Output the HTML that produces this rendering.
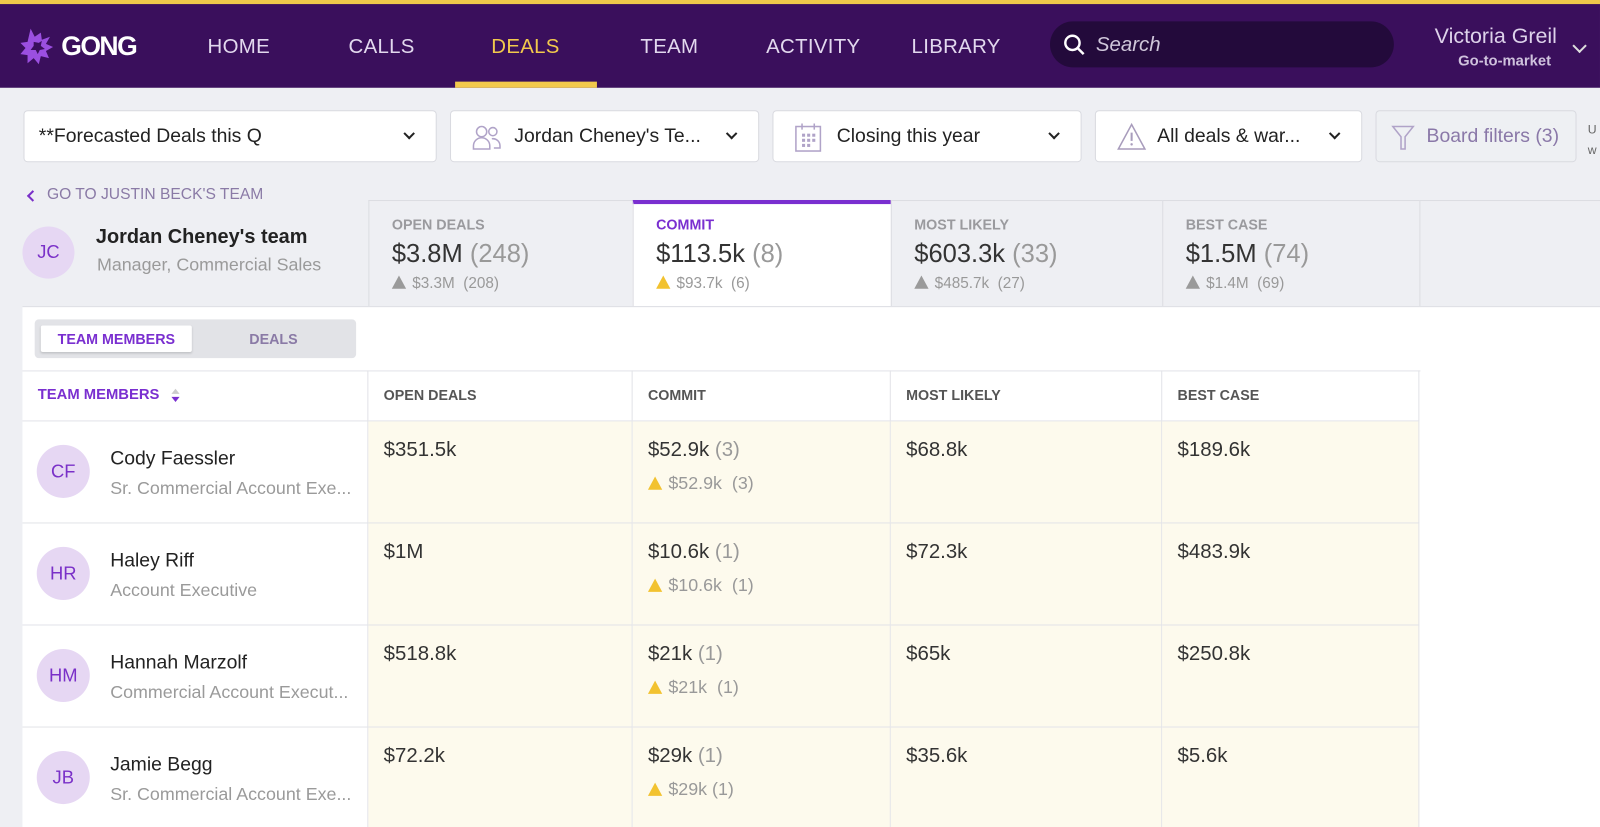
<!DOCTYPE html>
<html><head><meta charset="utf-8"><style>
*{box-sizing:border-box;margin:0;padding:0}
html,body{width:1600px;height:827px;overflow:hidden;background:#eeeff3}
body{font-family:"Liberation Sans",sans-serif;position:relative;color:#222}
#w{position:absolute;left:0;top:0;width:1568px;height:811px;transform:scale(1.0204);transform-origin:0 0}
.abs{position:absolute}
.nav{left:0;top:0;width:1568px;height:86px;background:#3a0f5c;border-top:4px solid #eec84a}
.ni{position:absolute;top:31px;font-size:20px;color:#e2d8ee;transform:translateX(-50%);letter-spacing:0.3px}
.fb{position:absolute;top:108px;height:51px;background:#fff;border:1px solid #d9dae0;border-radius:4px;font-size:19px;color:#222}
.fb .t{position:absolute;top:14px;white-space:nowrap}
.chev{position:absolute;top:18px;width:8px;height:8px;border-right:2px solid #222;border-bottom:2px solid #222;transform:rotate(45deg)}
.tab{position:absolute;top:196px;height:104px;border-left:1px solid #dcdde2;border-top:1px solid #dcdde2}
.tab .l{position:absolute;left:22px;top:15px;font-size:14px;font-weight:bold;color:#9a9a9e}
.tab .v{position:absolute;left:22px;top:38px;font-size:25px;color:#333;white-space:nowrap}
.tab .v span{color:#999}
.tab .s{position:absolute;left:22px;top:72px;font-size:15px;color:#999;white-space:nowrap}
.tri{display:inline-block;width:0;height:0;border-left:7px solid transparent;border-right:7px solid transparent;border-bottom:13px solid #9a9a9a;vertical-align:-1px;margin-right:6px}
.tri.y{border-bottom-color:#f2c230}
.cell{position:absolute;border-right:1px solid #e2e3e8;border-bottom:1px solid #e2e3e8}
.hd{font-size:14px;font-weight:bold;color:#555;padding:16px 0 0 15px;white-space:nowrap}
.dc{background:#fdfaed}
.val{position:absolute;left:15px;top:17px;font-size:20px;color:#333;white-space:nowrap}
.val span{color:#999}
.sub{position:absolute;left:15px;top:50px;font-size:17.5px;color:#999;white-space:nowrap}
.av{position:absolute;width:52px;height:52px;border-radius:50%;background:#e6d7f3;color:#7a30c8;font-size:18px;text-align:center;line-height:52px}
.nm{position:absolute;left:86px;font-size:19px;color:#222;white-space:nowrap}
.ti{position:absolute;left:86px;font-size:17.5px;color:#9a9a9a;white-space:nowrap}
</style></head><body><div id="w">
<div class="abs nav">
  <svg class="abs" style="left:20px;top:22px" width="36" height="40" viewBox="0 0 36 40"><path d="M10 2l4 8 6-4 1 7 8-3-4 7 7 3-7 4 3 7-8-2-2 8-5-6-6 5 0-8-7-1 5-6-5-5 7-1z" fill="#9b4fe0"/><path d="M13 15l5 1 3-2-1 5 4 3-5 1-2 4-2-4-5 0 3-4z" fill="#3a0f5c"/></svg>
  <div class="abs" style="left:60px;top:26px;font-size:26px;font-weight:bold;color:#fff;letter-spacing:-1.5px">GONG</div>
  <div class="ni" style="left:234px">HOME</div>
  <div class="ni" style="left:374px">CALLS</div>
  <div class="ni" style="left:515px;color:#f2c94c">DEALS</div>
  <div class="abs" style="left:446px;top:76px;width:139px;height:6px;background:#f2c94c"></div>
  <div class="ni" style="left:656px">TEAM</div>
  <div class="ni" style="left:797px">ACTIVITY</div>
  <div class="ni" style="left:937px">LIBRARY</div>
  <div class="abs" style="left:1029px;top:17px;width:337px;height:45px;background:#230a3b;border-radius:23px">
    <svg class="abs" style="left:13px;top:12px" width="22" height="22" viewBox="0 0 22 22"><circle cx="9" cy="9" r="7" stroke="#fff" stroke-width="2.4" fill="none"/><path d="M14 14l6 6" stroke="#fff" stroke-width="2.4"/></svg>
    <div class="abs" style="left:45px;top:12px;font-size:20px;font-style:italic;color:#cfc6da">Search</div>
  </div>
  <div class="abs" style="left:1406px;top:20px;font-size:21px;color:#ddd2ea;white-space:nowrap">Victoria Greil</div>
  <div class="abs" style="left:1429px;top:48px;font-size:14.5px;font-weight:bold;color:#cfc2dd">Go-to-market</div>
  <div class="abs" style="left:1543px;top:36px;width:10px;height:10px;border-right:2.5px solid #ddd;border-bottom:2.5px solid #ddd;transform:rotate(45deg)"></div>
</div>

<div class="fb" style="left:23px;width:405px"><div class="t" style="left:14px">**Forecasted Deals this Q</div><div class="chev" style="right:22px"></div></div>
<div class="fb" style="left:441px;width:303px">
  <svg class="abs" style="left:20px;top:13px" width="30" height="26" viewBox="0 0 30 26"><circle cx="10" cy="7" r="5" stroke="#b0a3c8" stroke-width="1.5" fill="none"/><circle cx="21" cy="7" r="4" stroke="#b0a3c8" stroke-width="1.5" fill="none"/><path d="M2 24v-3a8 8 0 0 1 16 0v3z M20 14a7 7 0 0 1 8 7v2h-6" stroke="#b0a3c8" stroke-width="1.5" fill="none"/></svg>
  <div class="t" style="left:62px">Jordan Cheney's Te...</div><div class="chev" style="right:22px"></div></div>
<div class="fb" style="left:757px;width:303px">
  <svg class="abs" style="left:20px;top:11px" width="28" height="30" viewBox="0 0 28 30"><rect x="2" y="4" width="24" height="24" stroke="#b0a3c8" stroke-width="1.5" fill="none"/><path d="M8 1v6M20 1v6" stroke="#b0a3c8" stroke-width="1.5"/><g fill="#b0a3c8"><rect x="8" y="11" width="3" height="3"/><rect x="13" y="11" width="3" height="3"/><rect x="18" y="11" width="3" height="3"/><rect x="8" y="16" width="3" height="3"/><rect x="13" y="16" width="3" height="3"/><rect x="18" y="16" width="3" height="3"/><rect x="8" y="21" width="3" height="3"/><rect x="13" y="21" width="3" height="3"/></g></svg>
  <div class="t" style="left:62px">Closing this year</div><div class="chev" style="right:22px"></div></div>
<div class="fb" style="left:1073px;width:262px">
  <svg class="abs" style="left:20px;top:11px" width="30" height="28" viewBox="0 0 30 28"><path d="M15 2L28 26H2z" stroke="#a89cbc" stroke-width="1.5" fill="none"/><path d="M15 10v8" stroke="#a89cbc" stroke-width="2"/><circle cx="15" cy="21.5" r="1.2" fill="#a89cbc"/></svg>
  <div class="t" style="left:60px">All deals &amp; war...</div><div class="chev" style="right:22px"></div></div>
<div class="fb" style="left:1348px;width:197px;background:#eef0f3">
  <svg class="abs" style="left:14px;top:13px" width="24" height="26" viewBox="0 0 24 26"><path d="M2 2h20l-8 10v12h-4V12z" stroke="#b0a3c8" stroke-width="1.5" fill="none"/></svg>
  <div class="t" style="left:49px;color:#8a78a8">Board filters (3)</div></div>
<div class="abs" style="left:1556px;top:117px;font-size:12px;color:#666;line-height:20px">U<br>w</div>

<div class="abs" style="left:28px;top:185px;width:8px;height:8px;border-left:2px solid #7a30c8;border-bottom:2px solid #7a30c8;transform:rotate(45deg);margin-top:3px"></div>
<div class="abs" style="left:46px;top:182px;font-size:15.3px;color:#8a7aa6;white-space:nowrap">GO TO JUSTIN BECK'S TEAM</div>
<div class="av" style="left:22px;top:222px;width:51px;height:51px;line-height:51px">JC</div>
<div class="abs" style="left:94px;top:221px;font-size:19.5px;font-weight:bold;color:#222;white-space:nowrap">Jordan Cheney's team</div>
<div class="abs" style="left:95px;top:249px;font-size:17.5px;color:#9a9a9a;white-space:nowrap">Manager, Commercial Sales</div>

<div class="tab" style="left:361px;width:259px"><div class="l">OPEN DEALS</div><div class="v">$3.8M <span>(248)</span></div><div class="s"><span class="tri"></span>$3.3M &nbsp;(208)</div></div>
<div class="tab" style="left:620px;width:253px;background:#fff;border-top:4px solid #7a2fd0;height:105px"><div class="l" style="color:#7a2fd0;top:12px">COMMIT</div><div class="v" style="top:35px">$113.5k <span>(8)</span></div><div class="s" style="top:69px"><span class="tri y"></span>$93.7k &nbsp;(6)</div></div>
<div class="tab" style="left:873px;width:266px"><div class="l">MOST LIKELY</div><div class="v">$603.3k <span>(33)</span></div><div class="s"><span class="tri"></span>$485.7k &nbsp;(27)</div></div>
<div class="tab" style="left:1139px;width:252px"><div class="l">BEST CASE</div><div class="v">$1.5M <span>(74)</span></div><div class="s"><span class="tri"></span>$1.4M &nbsp;(69)</div></div>
<div class="tab" style="left:1391px;width:209px"></div>

<div class="abs" style="left:22px;top:300px;width:1578px;height:527px;background:#fff;border-top:1px solid #dcdde2"></div>
<div class="abs" style="left:34px;top:313px;width:315px;height:38px;background:#e2e3e7;border-radius:4px"></div>
<div class="abs" style="left:40px;top:319px;width:148px;height:26px;background:#fff;border-radius:2px;box-shadow:0 1px 2px rgba(0,0,0,.15);font-size:14px;font-weight:bold;color:#7a2fd0;text-align:center;line-height:26px">TEAM MEMBERS</div>
<div class="abs" style="left:188px;top:319px;width:160px;height:26px;font-size:14px;font-weight:bold;color:#8a7aa6;text-align:center;line-height:26px">DEALS</div>

<div class="abs" style="left:22px;top:363px;width:1370px;height:1px;background:#e2e3e8"></div>
<div class="cell hd" style="left:22px;top:363px;width:339px;height:50px;color:#7a2fd0;font-size:14.5px">TEAM MEMBERS <span style="display:inline-block;vertical-align:middle;margin-left:8px;line-height:0"><span style="display:block;width:0;height:0;border-left:4px solid transparent;border-right:4px solid transparent;border-bottom:5px solid #ccc;margin-bottom:3px"></span><span style="display:block;width:0;height:0;border-left:4px solid transparent;border-right:4px solid transparent;border-top:5px solid #7a2fd0"></span></span></div>
<div class="cell hd" style="left:361px;top:363px;width:259px;height:50px">OPEN DEALS</div>
<div class="cell hd" style="left:620px;top:363px;width:253px;height:50px">COMMIT</div>
<div class="cell hd" style="left:873px;top:363px;width:266px;height:50px">MOST LIKELY</div>
<div class="cell hd" style="left:1139px;top:363px;width:252px;height:50px">BEST CASE</div>

<div class="cell" style="left:22px;top:413px;width:339px;height:100px"><div class="av" style="left:14px;top:23px">CF</div><div class="nm" style="top:26px">Cody Faessler</div><div class="ti" style="top:55px">Sr. Commercial Account Exe...</div></div>
<div class="cell dc" style="left:361px;top:413px;width:259px;height:100px"><div class="val">$351.5k</div></div>
<div class="cell dc" style="left:620px;top:413px;width:253px;height:100px"><div class="val">$52.9k <span>(3)</span></div><div class="sub"><span class="tri y"></span>$52.9k &nbsp;(3)</div></div>
<div class="cell dc" style="left:873px;top:413px;width:266px;height:100px"><div class="val">$68.8k</div></div>
<div class="cell dc" style="left:1139px;top:413px;width:252px;height:100px"><div class="val">$189.6k</div></div>

<div class="cell" style="left:22px;top:513px;width:339px;height:100px"><div class="av" style="left:14px;top:23px">HR</div><div class="nm" style="top:26px">Haley Riff</div><div class="ti" style="top:55px">Account Executive</div></div>
<div class="cell dc" style="left:361px;top:513px;width:259px;height:100px"><div class="val">$1M</div></div>
<div class="cell dc" style="left:620px;top:513px;width:253px;height:100px"><div class="val">$10.6k <span>(1)</span></div><div class="sub"><span class="tri y"></span>$10.6k &nbsp;(1)</div></div>
<div class="cell dc" style="left:873px;top:513px;width:266px;height:100px"><div class="val">$72.3k</div></div>
<div class="cell dc" style="left:1139px;top:513px;width:252px;height:100px"><div class="val">$483.9k</div></div>

<div class="cell" style="left:22px;top:613px;width:339px;height:100px"><div class="av" style="left:14px;top:23px">HM</div><div class="nm" style="top:26px">Hannah Marzolf</div><div class="ti" style="top:55px">Commercial Account Execut...</div></div>
<div class="cell dc" style="left:361px;top:613px;width:259px;height:100px"><div class="val">$518.8k</div></div>
<div class="cell dc" style="left:620px;top:613px;width:253px;height:100px"><div class="val">$21k <span>(1)</span></div><div class="sub"><span class="tri y"></span>$21k &nbsp;(1)</div></div>
<div class="cell dc" style="left:873px;top:613px;width:266px;height:100px"><div class="val">$65k</div></div>
<div class="cell dc" style="left:1139px;top:613px;width:252px;height:100px"><div class="val">$250.8k</div></div>

<div class="cell" style="left:22px;top:713px;width:339px;height:114px;border-bottom:none"><div class="av" style="left:14px;top:23px">JB</div><div class="nm" style="top:26px">Jamie Begg</div><div class="ti" style="top:55px">Sr. Commercial Account Exe...</div></div>
<div class="cell dc" style="left:361px;top:713px;width:259px;height:114px;border-bottom:none"><div class="val">$72.2k</div></div>
<div class="cell dc" style="left:620px;top:713px;width:253px;height:114px;border-bottom:none"><div class="val">$29k <span>(1)</span></div><div class="sub"><span class="tri y"></span>$29k (1)</div></div>
<div class="cell dc" style="left:873px;top:713px;width:266px;height:114px;border-bottom:none"><div class="val">$35.6k</div></div>
<div class="cell dc" style="left:1139px;top:713px;width:252px;height:114px;border-bottom:none"><div class="val">$5.6k</div></div>
</div></body></html>
